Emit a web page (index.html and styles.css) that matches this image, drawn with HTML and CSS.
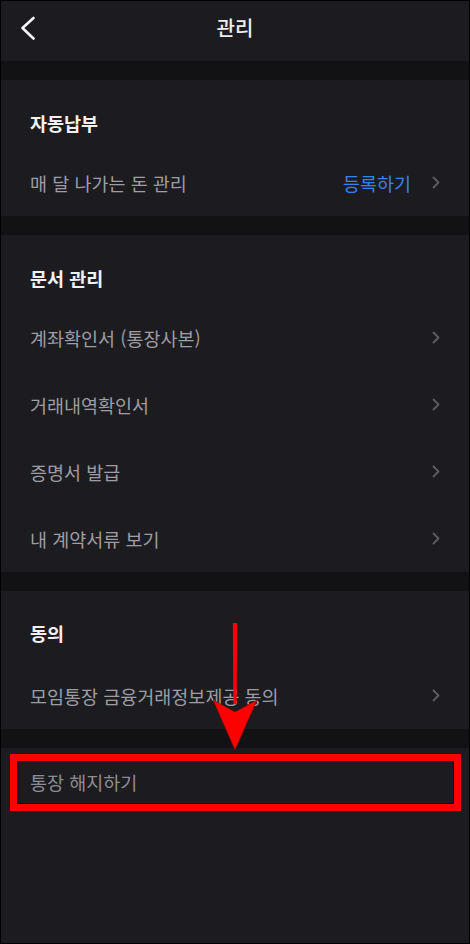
FILE: index.html
```html
<!DOCTYPE html>
<html lang="ko">
<head>
<meta charset="utf-8">
<title>관리</title>
<link rel="stylesheet" href="styles.css">
</head>
<body>
<div class="screen">
  <header class="topbar">
    <button class="back" aria-label="뒤로">
      <svg width="16" height="24" viewBox="0 0 16 24"><polyline points="13.5,2 2.5,12 13.5,22.5" fill="none" stroke="#f4f4f5" stroke-width="2.6" stroke-linecap="round" stroke-linejoin="round"/></svg>
    </button>
    <h1 class="title">관리</h1>
    <span></span>
  </header>

  <section class="section">
    <h2 class="section-title">자동납부</h2>
    <div class="row">
      <span class="row-label">매 달 나가는 돈 관리</span>
      <span class="row-end"><span class="row-action">등록하기</span><svg class="chev" width="8" height="13" viewBox="0 0 8 13"><polyline points="1.5,1.5 6.5,6.5 1.5,11.5" fill="none" stroke="#5c5c62" stroke-width="1.8" stroke-linecap="round" stroke-linejoin="round"/></svg></span>
    </div>
  </section>

  <section class="section">
    <h2 class="section-title">문서 관리</h2>
    <div class="row">
      <span class="row-label">계좌확인서 (통장사본)</span>
      <svg class="chev" width="8" height="13" viewBox="0 0 8 13"><polyline points="1.5,1.5 6.5,6.5 1.5,11.5" fill="none" stroke="#5c5c62" stroke-width="1.8" stroke-linecap="round" stroke-linejoin="round"/></svg>
    </div>
    <div class="row">
      <span class="row-label">거래내역확인서</span>
      <svg class="chev" width="8" height="13" viewBox="0 0 8 13"><polyline points="1.5,1.5 6.5,6.5 1.5,11.5" fill="none" stroke="#5c5c62" stroke-width="1.8" stroke-linecap="round" stroke-linejoin="round"/></svg>
    </div>
    <div class="row">
      <span class="row-label">증명서 발급</span>
      <svg class="chev" width="8" height="13" viewBox="0 0 8 13"><polyline points="1.5,1.5 6.5,6.5 1.5,11.5" fill="none" stroke="#5c5c62" stroke-width="1.8" stroke-linecap="round" stroke-linejoin="round"/></svg>
    </div>
    <div class="row">
      <span class="row-label">내 계약서류 보기</span>
      <svg class="chev" width="8" height="13" viewBox="0 0 8 13"><polyline points="1.5,1.5 6.5,6.5 1.5,11.5" fill="none" stroke="#5c5c62" stroke-width="1.8" stroke-linecap="round" stroke-linejoin="round"/></svg>
    </div>
  </section>

  <section class="section section-consent">
    <h2 class="section-title">동의</h2>
    <div class="row">
      <span class="row-label">모임통장 금융거래정보제공 동의</span>
      <svg class="chev" width="8" height="13" viewBox="0 0 8 13"><polyline points="1.5,1.5 6.5,6.5 1.5,11.5" fill="none" stroke="#5c5c62" stroke-width="1.8" stroke-linecap="round" stroke-linejoin="round"/></svg>
    </div>
  </section>

  <section class="section section-last">
    <div class="row row-close">
      <span class="row-label row-label-dim">통장 해지하기</span>
    </div>
  </section>

  <div class="highlight-box"></div>
  <svg class="arrow" width="50" height="132" viewBox="0 0 50 132">
    <polygon points="22.8,1 27.2,1 26.6,82 23.4,82" fill="#ff0000"/>
    <polygon points="3,78 25,90 47,78 25,128" fill="#ff0000" stroke="#8a0000" stroke-width="0.6" stroke-linejoin="miter"/>
  </svg>
</div>
</body>
</html>
```

FILE: styles.css
```css
* {
  box-sizing: border-box;
}

html, body {
  margin: 0;
  padding: 0;
  background: #000;
}

body {
  font-family: "Noto Sans CJK KR", "Noto Sans", sans-serif;
}

.screen {
  position: relative;
  width: 470px;
  height: 944px;
  border: 1px solid #000;
  background: #121215;
  display: flex;
  flex-direction: column;
  gap: 19px;
  overflow: hidden;
}

.topbar {
  height: 60px;
  flex: none;
  background: #1c1c20;
  display: grid;
  grid-template-columns: 1fr auto 1fr;
  align-items: center;
  padding: 0 19px 6px 19px;
}

.back {
  background: none;
  border: 0;
  padding: 0;
  width: 16px;
  height: 24px;
  display: flex;
  cursor: pointer;
}

.title {
  margin: 0;
  font-size: 20px;
  font-weight: 500;
  color: #ededf0;
  line-height: 26px;
}

.section {
  flex: none;
  background: #1c1c20;
}

.section-title {
  margin: 0;
  padding: 30px 30px 13px 29px;
  font-size: 18.5px;
  font-weight: 700;
  line-height: 26px;
  color: #f1f1f3;
}

.section-consent .section-title {
  padding-bottom: 16px;
  padding-top: 29px;
}

.section-last {
  flex: 1;
}

.row {
  height: 67px;
  display: flex;
  align-items: center;
  justify-content: space-between;
  padding: 0 29px 0 29px;
}

.row-label {
  font-size: 18.5px;
  line-height: 26px;
  color: #9d9da3;
}

.row-label-dim {
  color: #8d8d93;
}

.row-end {
  display: flex;
  align-items: center;
  gap: 21px;
}

.row-action {
  font-size: 18.5px;
  line-height: 26px;
  color: #3484ee;
}

.chev {
  display: block;
  flex: none;
}

.highlight-box {
  position: absolute;
  left: 9px;
  top: 753px;
  width: 451px;
  height: 57px;
  border: 7px solid #ff0000;
  box-shadow: 1px 1px 0 rgba(60, 0, 0, 0.8), inset 0 0 0 1px rgba(20, 0, 0, 0.7);
}

.arrow {
  position: absolute;
  left: 209px;
  top: 621px;
}
```
